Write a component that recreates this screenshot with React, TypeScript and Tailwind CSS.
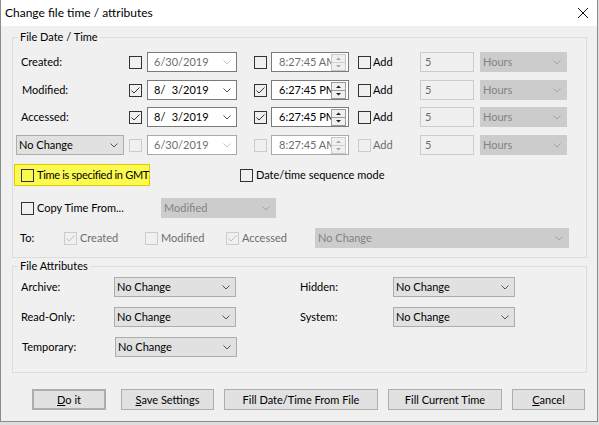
import React from "react";
import clsx from "clsx";

const Chevron = ({ color = "#555555" }: { color?: string }) => (
  <svg width="8" height="5" viewBox="0 0 8 5" className="shrink-0">
    <polyline points="0.5,0.5 4,4 7.5,0.5" fill="none" stroke={color} strokeWidth="1" />
  </svg>
);

const Check = ({ checked = false, disabled = false }: { checked?: boolean; disabled?: boolean }) => (
  <span
    className={clsx(
      "flex h-[13px] w-[13px] shrink-0 items-center justify-center border",
      disabled ? "border-[#cccccc]" : "border-[#333333]"
    )}
  >
    {checked && (
      <svg width="11" height="11" viewBox="0 0 11 11">
        <polyline
          points="1.5,5.5 4,8 9.5,2.5"
          fill="none"
          stroke={disabled ? "#bdbdbd" : "#333333"}
          strokeWidth="1"
        />
      </svg>
    )}
  </span>
);

const Combo = ({
  text,
  className,
  disabled = false,
}: {
  text: string;
  className?: string;
  disabled?: boolean;
}) => (
  <div
    className={clsx(
      "flex h-[20px] shrink-0 items-center justify-between border pl-[2px] pr-[5px]",
      disabled
        ? "border-[#cccccc] bg-[#cccccc] text-[#838383]"
        : "border-[#adadad] bg-[#e1e1e1] text-black",
      className
    )}
  >
    <span>{text}</span>
    <Chevron color={disabled ? "#a3a3a3" : "#555555"} />
  </div>
);

const DateField = ({ text, dim = false, faint = false }: { text: string; dim?: boolean; faint?: boolean }) => (
  <div
    className={clsx(
      "flex h-[20px] w-[90px] shrink-0 items-center justify-between border bg-white pl-[6px] pr-[5px]",
      faint ? "border-[#a9a9a9]" : "border-[#7a7a7a]",
      dim ? "text-[#6d6d6d]" : "text-black"
    )}
  >
    <span className="whitespace-pre">{text}</span>
    <Chevron color={dim ? "#c4c4c4" : "#555555"} />
  </div>
);

const Spinner = ({ dim = false }: { dim?: boolean }) => {
  const c = dim ? "#a6a6a6" : "#1a1a1a";
  return (
    <svg width="15" height="17" viewBox="0 0 15 17" className="shrink-0">
      <rect x="0.5" y="0.5" width="14" height="16" fill="#f0f0f0" stroke={dim ? "#c8c8c8" : "#9a9a9a"} />
      <line x1="1" y1="8.5" x2="14" y2="8.5" stroke={dim ? "#d0d0d0" : "#9a9a9a"} />
      <polygon points="5,6 10,6 7.5,3.5" fill={c} />
      <polygon points="5,11 10,11 7.5,13.5" fill={c} />
    </svg>
  );
};

const TimeField = ({ text, dim = false, faint = false }: { text: string; dim?: boolean; faint?: boolean }) => (
  <div
    className={clsx(
      "flex h-[20px] w-[78px] shrink-0 items-center border bg-white pl-[7px] pr-px",
      faint ? "border-[#a9a9a9]" : "border-[#7a7a7a]",
      dim ? "text-[#6d6d6d]" : "text-black"
    )}
  >
    <span className="w-[52px] overflow-hidden whitespace-nowrap">{text}</span>
    <Spinner dim={dim} />
  </div>
);

type RowProps = {
  left: React.ReactNode;
  on?: boolean;
  dim?: boolean;
  off?: boolean;
  date: string;
  time: string;
  className?: string;
};

const DateRow = ({ left, on = false, dim = false, off = false, date, time, className }: RowProps) => (
  <div className={clsx("flex h-[20px] items-center", className)}>
    <div className="w-[116px] shrink-0">{left}</div>
    <Check checked={on} disabled={off} />
    <div className="ml-[5px]">
      <DateField text={date} dim={dim} faint={off} />
    </div>
    <div className="ml-[17px]">
      <Check checked={on} disabled={off} />
    </div>
    <div className="ml-[4px]">
      <TimeField text={time} dim={dim} faint={off} />
    </div>
    <div className="ml-[9px] flex w-[62px] shrink-0 items-center">
      <Check disabled={off} />
      <span className={clsx("ml-[2px]", off ? "text-[#6d6d6d]" : "text-black")}>Add</span>
    </div>
    <div className="flex h-[20px] w-[54px] shrink-0 items-center border border-[#cccccc] bg-[#f0f0f0] pl-[4px] text-[#6d6d6d]">
      5
    </div>
    <Combo text="Hours" disabled className="ml-[6px] w-[87px]" />
  </div>
);

const Btn = ({ children, className }: { children: React.ReactNode; className?: string }) => (
  <button
    className={clsx(
      "flex h-[21px] shrink-0 items-center justify-center border border-[#adadad] bg-[#e1e1e1] text-black",
      className
    )}
  >
    {children}
  </button>
);

export default function App() {
  return (
    <div className="h-[425px] w-[599px] overflow-hidden bg-[#dedede] font-['Lato',sans-serif] text-[11px] leading-[16px] text-black">
      <div className="flex h-[422px] w-[598px] flex-col border-x border-b border-[#8c8c8c]">
        {/* title bar */}
        <div className="flex h-[26px] shrink-0 items-center justify-between bg-white pl-[4px] pr-[8px]">
          <span className="text-[12px]">Change file time / attributes</span>
          <svg width="12" height="12" viewBox="0 0 12 12">
            <path d="M1 1 L11 11 M11 1 L1 11" stroke="#111111" strokeWidth="1" />
          </svg>
        </div>

        <div className="flex-1 bg-[#f0f0f0] pt-[3px]">
          <fieldset className="ml-[11px] w-[575px] border border-[#dcdcdc] pb-[9px]">
            <legend className="ml-[5px] px-[2px]">File Date / Time</legend>
            <div className="pt-[7px]">
              <DateRow left={<span className="pl-[8px]">Created:</span>} dim date="6/30/2019" time="8:27:45 AM" />
              <DateRow
                left={<span className="pl-[9px]">Modified:</span>}
                on
                date={"8/\u20073/2019"}
                time="6:27:45 PM"
                className="mt-[8px]"
              />
              <DateRow
                left={<span className="pl-[8px]">Accessed:</span>}
                on
                date={"8/\u20073/2019"}
                time="6:27:45 PM"
                className="mt-[7px]"
              />
              <DateRow
                left={<Combo text="No Change" className="ml-[3px] w-[108px]" />}
                dim
                off
                date="6/30/2019"
                time="8:27:45 AM"
                className="mt-[8px]"
              />

              <div className="mt-[9px] flex items-center">
                <div className="ml-px flex h-[22px] w-[136px] items-center border border-[#e3c800] bg-[#fafa50] pl-[6px]">
                  <Check />
                  <span className="ml-[3px] whitespace-nowrap tracking-[-0.3px]">Time is specified in GMT</span>
                </div>
                <div className="ml-[90px] flex items-center">
                  <Check />
                  <span className="ml-[3px]">Date/time sequence mode</span>
                </div>
              </div>

              <div className="mt-[12px] flex h-[20px] items-center">
                <div className="ml-[8px] flex w-[140px] items-center">
                  <Check />
                  <span className="ml-[3px]">Copy Time From...</span>
                </div>
                <Combo text="Modified" disabled className="w-[115px]" />
              </div>

              <div className="mt-[10px] flex h-[20px] items-center">
                <span className="ml-[7px] w-[44px]">To:</span>
                <div className="flex w-[81px] items-center">
                  <Check checked disabled />
                  <span className="ml-[3px] text-[#6d6d6d]">Created</span>
                </div>
                <div className="flex w-[81px] items-center">
                  <Check disabled />
                  <span className="ml-[3px] text-[#6d6d6d]">Modified</span>
                </div>
                <div className="flex w-[89px] items-center">
                  <Check checked disabled />
                  <span className="ml-[3px] text-[#6d6d6d]">Accessed</span>
                </div>
                <Combo text="No Change" disabled className="w-[254px]" />
              </div>
            </div>
          </fieldset>

          <fieldset className="ml-[11px] w-[575px] border border-[#dcdcdc] pb-[15px]">
            <legend className="ml-[5px] px-[2px]">File Attributes</legend>
            <div className="flex flex-col gap-[10px] pt-[3px]">
              <div className="flex h-[20px] items-center">
                <span className="w-[101px] pl-[8px]">Archive:</span>
                <Combo text="No Change" className="w-[122px]" />
                <span className="w-[157px] pl-[64px]">Hidden:</span>
                <Combo text="No Change" className="w-[122px]" />
              </div>
              <div className="flex h-[20px] items-center">
                <span className="w-[101px] pl-[8px]">Read-Only:</span>
                <Combo text="No Change" className="w-[122px]" />
                <span className="w-[157px] pl-[64px]">System:</span>
                <Combo text="No Change" className="w-[122px]" />
              </div>
              <div className="flex h-[20px] items-center">
                <span className="w-[102px] pl-[9px]">Temporary:</span>
                <Combo text="No Change" className="w-[122px]" />
              </div>
            </div>
          </fieldset>

          <div className="ml-[31px] mt-[16px] flex items-center">
            <Btn className="w-[74px] border-2 border-[#0078d7]">
              <span>
                <span className="underline">D</span>o it
              </span>
            </Btn>
            <Btn className="ml-[15px] w-[93px]">
              <span>
                <span className="underline">S</span>ave Settings
              </span>
            </Btn>
            <Btn className="ml-[10px] w-[154px]">Fill Date/Time From File</Btn>
            <Btn className="ml-[10px] w-[114px]">Fill Current Time</Btn>
            <Btn className="ml-[10px] w-[73px]">
              <span>
                <span className="underline">C</span>ancel
              </span>
            </Btn>
          </div>
        </div>
      </div>
    </div>
  );
}
